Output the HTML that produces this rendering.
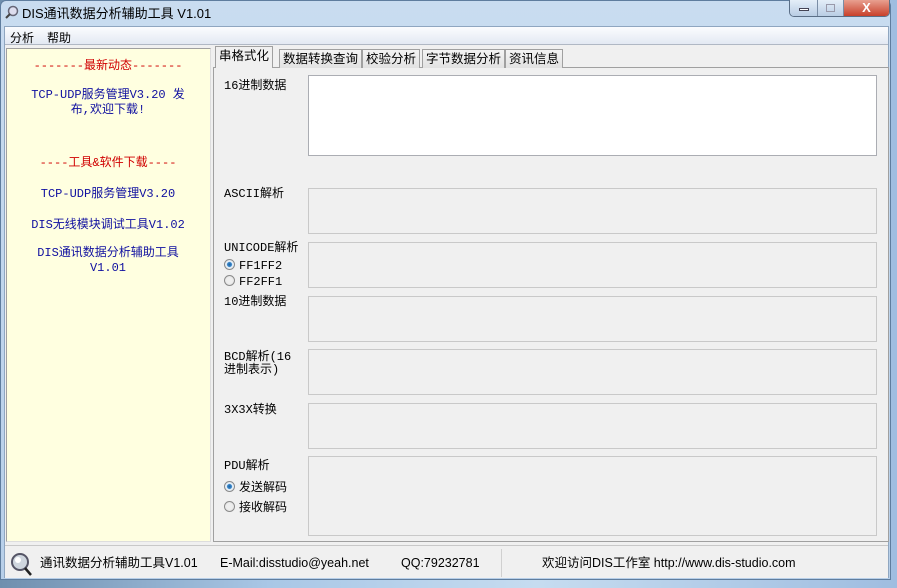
<!DOCTYPE html>
<html><head><meta charset="utf-8"><style>
*{margin:0;padding:0;box-sizing:border-box}
body{width:897px;height:588px;overflow:hidden;position:relative;background:linear-gradient(90deg,#6f8fae,#a9c7e6 30%,#c6dcf0 60%,#9fbde0);font-family:"Liberation Sans","Noto Sans CJK SC",sans-serif;font-size:12px}
.abs{position:absolute}
.win{left:0;top:0;width:891px;height:580px;background:linear-gradient(180deg,#c9dcf0,#b7cfe9);border:1px solid #5f7d9e;border-radius:6px 6px 0 0}
.mono{font-family:"Liberation Mono","Noto Sans CJK SC",monospace;font-size:12px}
.box{position:absolute;left:308px;width:569px;border:1px solid #c9c9c9;background:#f0f0f0}
.lbl{position:absolute;left:224px;color:#000;line-height:13px}
.radio{display:inline-block;width:11px;height:11px;border-radius:50%;border:1px solid #8a8a8a;background:radial-gradient(circle,#eee 40%,#ddd);vertical-align:-1px;margin-right:4px}
.radio.on{background:radial-gradient(circle,#1f5f98 0,#3b8ad0 35%,#e6eef5 45%)}
.tab{position:absolute;top:49px;height:19px;border:1px solid #a0a0a0;border-bottom:none;background:linear-gradient(#f4f4f4,#e2e2e2);padding:2px 3px 0;font-size:12.5px;line-height:15px}
.lp{color:#1010a0;text-align:center;position:absolute;left:6px;width:204px}
.st{position:absolute;top:555px;font-size:12.5px;line-height:16px;height:16px}
</style></head><body>
<div class="abs win"></div>
<div class="abs" style="left:5px;top:5px;width:14px;height:14px">
<svg width="14" height="14"><circle cx="8" cy="6" r="4.5" fill="#dde" stroke="#667" stroke-width="1.5"/><line x1="5" y1="9" x2="1" y2="13" stroke="#444" stroke-width="2"/></svg></div>
<div class="abs" style="left:22px;top:3px;font-size:13px;color:#000">DIS通讯数据分析辅助工具 V1.01</div>
<div class="abs" style="left:789px;top:0;width:101px;height:17px;border:1px solid #5a6e86;border-top:none;border-radius:0 0 5px 5px;overflow:hidden;display:flex">
<div style="width:28px;background:linear-gradient(#e4eef8,#b9cde4);border-right:1px solid #7a8da5;position:relative"><div class="abs" style="left:9px;top:8px;width:10px;height:3px;background:#fff;border:1px solid #445"></div></div>
<div style="width:26px;background:linear-gradient(#e4eef8,#b9cde4);border-right:1px solid #7a8da5;position:relative"><div class="abs" style="left:8px;top:4px;width:9px;height:8px;border:1px solid #99a"></div></div>
<div style="flex:1;background:linear-gradient(#e8a090,#c8402a);color:#fff;font-weight:bold;text-align:center;font-size:13px;line-height:15px">X</div>
</div>
<div class="abs" style="left:4px;top:26px;width:885px;height:552px;background:#f0f0f0;border:1px solid #8fa6c0"></div>
<div class="abs" style="left:5px;top:27px;width:883px;height:18px;background:linear-gradient(#fbfcfe,#e3e9f3);border-bottom:1px solid #b0b8c4"></div>
<div class="abs" style="left:10px;top:29px">分析</div>
<div class="abs" style="left:47px;top:29px">帮助</div>
<div class="abs" style="left:6px;top:48px;width:205px;height:494px;background:#ffffe0;border:1px solid #a0a0a0;border-right-color:#ddd;border-bottom-color:#ddd"></div>
<div class="lp mono" style="top:56px;color:#d00000">-------最新动态-------</div>
<div class="lp mono" style="top:88px;line-height:15px;padding:0 20px">TCP-UDP服务管理V3.20 发布,欢迎下载!</div>
<div class="lp mono" style="top:153px;color:#d00000">----工具&amp;软件下载----</div>
<div class="lp mono" style="top:184px">TCP-UDP服务管理V3.20</div>
<div class="lp mono" style="top:215px">DIS无线模块调试工具V1.02</div>
<div class="lp mono" style="top:246px;line-height:15px;padding:0 20px">DIS通讯数据分析辅助工具 V1.01</div>
<div class="abs" style="left:213px;top:67px;width:676px;height:475px;background:#f0f0f0;border:1px solid #a0a0a0"></div>
<div class="tab" style="left:279px">数据转换查询</div>
<div class="tab" style="left:362px">校验分析</div>
<div class="tab" style="left:422px">字节数据分析</div>
<div class="tab" style="left:505px">资讯信息</div>
<div class="tab" style="left:215px;top:46px;height:22px;background:#f0f0f0;z-index:2">串格式化</div>
<div class="box" style="top:75px;height:81px;background:#fff;border-color:#abadb3"></div>
<div class="box" style="top:188px;height:46px"></div>
<div class="box" style="top:242px;height:46px"></div>
<div class="box" style="top:296px;height:46px"></div>
<div class="box" style="top:349px;height:46px"></div>
<div class="box" style="top:403px;height:46px"></div>
<div class="box" style="top:456px;height:80px"></div>
<div class="lbl mono" style="top:80px">16进制数据</div>
<div class="lbl mono" style="top:188px">ASCII解析</div>
<div class="lbl mono" style="top:242px">UNICODE解析</div>
<div class="lbl mono" style="top:259px"><span class="radio on"></span>FF1FF2</div>
<div class="lbl mono" style="top:275px"><span class="radio"></span>FF2FF1</div>
<div class="lbl mono" style="top:296px">10进制数据</div>
<div class="lbl mono" style="top:351px">BCD解析(16<br>进制表示)</div>
<div class="lbl mono" style="top:404px">3X3X转换</div>
<div class="lbl mono" style="top:460px">PDU解析</div>
<div class="lbl mono" style="top:481px"><span class="radio on"></span>发送解码</div>
<div class="lbl mono" style="top:501px"><span class="radio"></span>接收解码</div>
<div class="abs" style="left:5px;top:545px;width:883px;height:33px;background:#f0f0f0;border-top:1px solid #c8c8c8"></div>
<div class="abs" style="left:9px;top:552px"><svg width="24" height="24"><circle cx="11" cy="10" r="8" fill="#cfd6de" stroke="#556" stroke-width="2"/><circle cx="9" cy="8" r="3" fill="#fff"/><line x1="16" y1="16" x2="22" y2="23" stroke="#222" stroke-width="2.5"/></svg></div>
<div class="st" style="left:40px">通讯数据分析辅助工具V1.01</div>
<div class="st" style="left:220px">E-Mail:disstudio@yeah.net</div>
<div class="st" style="left:401px">QQ:79232781</div>
<div class="abs" style="left:501px;top:549px;width:1px;height:28px;background:#d0d0d0"></div>
<div class="st" style="left:542px">欢迎访问DIS工作室 http://www.dis-studio.com</div>
</body></html>
